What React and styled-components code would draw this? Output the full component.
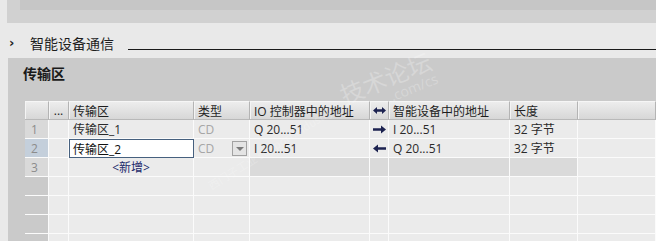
import React from "react";
import styled, { createGlobalStyle } from "styled-components";

const GlobalStyle = createGlobalStyle`
  html, body {
    margin: 0;
    padding: 0;
    background: #e9e9e9;
  }
  body {
    width: 656px;
    height: 241px;
    overflow: hidden;
    font-family: "Open Sans", "Noto Sans CJK SC", sans-serif;
  }
`;

const columns = "24px 20px 125px 56px 120px 19px 121px 68px 1fr";

const rows = [
  { no: 1, name: "传输区_1", type: "CD", io: "Q 20...51", dir: "right", dev: "I 20...51", len: "32 字节" },
  { no: 2, name: "传输区_2", type: "CD", io: "I 20...51", dir: "left", dev: "Q 20...51", len: "32 字节", selected: true },
];

const Arrow = ({ dir }) => (
  <svg width="13" height="9" viewBox="0 0 13 9">
    {dir === "both" ? (
      <path d="M0 4.5 L4 1 L4 3.3 L9 3.3 L9 1 L13 4.5 L9 8 L9 5.7 L4 5.7 L4 8 Z" fill="#1c2250" />
    ) : dir === "right" ? (
      <path d="M0 3.3 L8 3.3 L8 0.5 L13 4.5 L8 8.5 L8 5.7 L0 5.7 Z" fill="#1c2250" />
    ) : (
      <path d="M13 3.3 L5 3.3 L5 0.5 L0 4.5 L5 8.5 L5 5.7 L13 5.7 Z" fill="#1c2250" />
    )}
  </svg>
);

const App = () => {
  return (
    <>
      <GlobalStyle />
      <Page>
        <TopBand>
          <TopInner />
        </TopBand>

        <Section>
          <Chevron>›</Chevron>
          <SectionTitle>智能设备通信</SectionTitle>
          <Rule />
        </Section>

        <Panel>
          <PanelTitle>传输区</PanelTitle>
          <Table>
            <Row>
              <HeadCell />
              <HeadCell $center>...</HeadCell>
              <HeadCell>传输区</HeadCell>
              <HeadCell>类型</HeadCell>
              <HeadCell>IO 控制器中的地址</HeadCell>
              <HeadCell $center>
                <Arrow dir="both" />
              </HeadCell>
              <HeadCell>智能设备中的地址</HeadCell>
              <HeadCell>长度</HeadCell>
              <HeadCell />
            </Row>

            {rows.map((r) => (
              <Row key={r.no}>
                <NumCell $selected={r.selected}>{r.no}</NumCell>
                <Cell />
                {r.selected ? <EditCell>{r.name}</EditCell> : <Cell>{r.name}</Cell>}
                <TypeCell>
                  {r.type}
                  {r.selected && <DropButton />}
                </TypeCell>
                <Cell>{r.io}</Cell>
                <Cell $center>
                  <Arrow dir={r.dir} />
                </Cell>
                <Cell>{r.dev}</Cell>
                <Cell>{r.len}</Cell>
                <Cell />
              </Row>
            ))}

            <Row>
              <NumCell>3</NumCell>
              <Cell />
              <AddCell>&lt;新增&gt;</AddCell>
              <Cell />
              <Cell $dark />
              <Cell $dark />
              <Cell $dark />
              <Cell $dark />
              <Cell />
            </Row>

            {[4, 5, 6, 7].map((n) => (
              <Row key={n}>
                <EmptyNum />
                <Cell />
                <Cell />
                <Cell />
                <Cell />
                <Cell />
                <Cell />
                <Cell />
                <Cell />
              </Row>
            ))}
          </Table>

          <Watermark>
            <span>技术论坛</span>
            <small>.com/cs</small>
          </Watermark>
          <WatermarkSmall>西门子工业 support.industry</WatermarkSmall>
        </Panel>
      </Page>
    </>
  );
};

const Page = styled.div`
  width: 656px;
  height: 241px;
  overflow: hidden;
  display: flex;
  flex-direction: column;
`;

const TopBand = styled.div`
  flex-shrink: 0;
  margin-left: 7px;
  height: 23px;
  background: #d1d1d1;
`;

const TopInner = styled.div`
  margin-left: 13px;
  height: 10px;
  background: #c6c6c6;
`;

const Section = styled.div`
  flex-shrink: 0;
  height: 35px;
  display: flex;
  align-items: flex-start;
  padding-left: 9px;
`;

const Chevron = styled.span`
  font-family: "DejaVu Sans", sans-serif;
  font-weight: bold;
  font-size: 13px;
  line-height: 20px;
  margin-top: 10px;
  color: #222;
  width: 21px;
`;

const SectionTitle = styled.span`
  font-family: "Noto Sans CJK SC", sans-serif;
  font-size: 14px;
  line-height: 20px;
  margin-top: 10px;
  color: #1e1e1e;
`;

const Rule = styled.div`
  flex: 1;
  height: 1px;
  margin-top: 26px;
  margin-left: 14px;
  background: #1a1a1a;
`;

const Panel = styled.div`
  position: relative;
  flex: 1 0 auto;
  margin-left: 8px;
  background: #cacaca;
`;

const PanelTitle = styled.div`
  font-family: "Noto Sans CJK SC", sans-serif;
  font-weight: bold;
  font-size: 14px;
  line-height: 18px;
  padding: 6px 0 0 15px;
  color: #1a1a1a;
`;

const Table = styled.div`
  margin: 19px 0 0 17px;
  font-size: 12px;
  color: #222;
`;

const Row = styled.div`
  display: grid;
  grid-template-columns: ${columns};
  height: 19px;
`;

const HeadCell = styled.div`
  box-sizing: border-box;
  display: flex;
  align-items: center;
  justify-content: ${(p) => (p.$center ? "center" : "flex-start")};
  padding-left: ${(p) => (p.$center ? "0" : "4px")};
  background: linear-gradient(#ededed, #d7d7d7);
  border-top: 1px solid #f6f6f6;
  border-bottom: 1px solid #b9b9b9;
  border-right: 1px solid #b4b4b4;
  box-shadow: inset 1px 0 0 #f4f4f4;
  white-space: nowrap;
  overflow: hidden;
  color: #1e1e1e;
`;

const Cell = styled.div`
  box-sizing: border-box;
  display: flex;
  align-items: center;
  justify-content: ${(p) => (p.$center ? "center" : "flex-start")};
  padding-left: ${(p) => (p.$center ? "0" : "4px")};
  background: ${(p) => (p.$dark ? "#dadada" : "#ebebeb")};
  border-right: 1px solid #fbfbfb;
  border-bottom: 1px solid #fbfbfb;
  white-space: nowrap;
  overflow: hidden;
  color: #2a2a2a;
`;

const NumCell = styled(Cell)`
  padding-left: 6px;
  color: #8c8c8c;
  background: ${(p) => (p.$selected ? "#c4cfdb" : "#d9d9d9")};
`;

const EmptyNum = styled(Cell)`
  background: transparent;
`;

const EditCell = styled(Cell)`
  background: #ffffff;
  border: 1px solid #46607e;
  padding-left: 3px;
  color: #111;
`;

const TypeCell = styled(Cell)`
  justify-content: space-between;
  padding-right: 2px;
  color: #a6a6a6;
`;

const DropButton = styled.div`
  width: 15px;
  height: 15px;
  box-sizing: border-box;
  border: 1px solid #a2a2a2;
  background: #e4e4e4;
  position: relative;
  &::after {
    content: "";
    position: absolute;
    left: 3px;
    top: 5px;
    border-left: 4px solid transparent;
    border-right: 4px solid transparent;
    border-top: 4px solid #7a7a7a;
  }
`;

const AddCell = styled(Cell)`
  justify-content: center;
  padding-left: 0;
  color: #1b2a6b;
`;

const Watermark = styled.div`
  position: absolute;
  left: 332px;
  top: 6px;
  transform: rotate(-22deg);
  display: flex;
  flex-direction: column;
  align-items: flex-end;
  pointer-events: none;
  color: rgba(255, 255, 255, 0.25);
  font-family: "Noto Sans CJK SC", sans-serif;

  span {
    font-size: 24px;
    line-height: 26px;
  }
  small {
    font-family: "Open Sans", sans-serif;
    font-size: 14px;
    line-height: 14px;
  }
`;

const WatermarkSmall = styled.div`
  position: absolute;
  left: 190px;
  top: 82px;
  transform: rotate(-32deg);
  pointer-events: none;
  color: rgba(255, 255, 255, 0.22);
  font-family: "Noto Sans CJK SC", sans-serif;
  font-size: 11px;
  white-space: nowrap;
`;

export default App;
